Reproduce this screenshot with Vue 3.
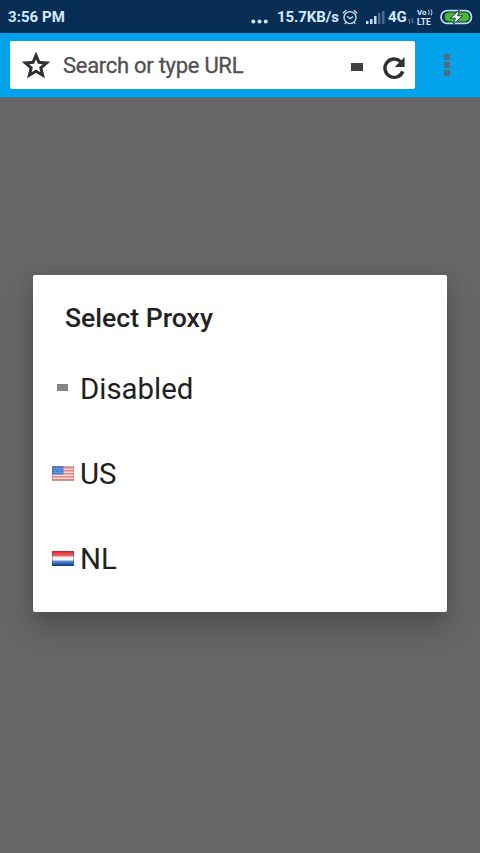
<script setup>
const stripes = [0, 1, 2, 3, 4]
const signal = [
  { x: 0, h: 3, on: true },
  { x: 4, h: 5, on: true },
  { x: 8, h: 8, on: true },
  { x: 12, h: 11, on: false },
  { x: 16, h: 13, on: false }
]
const proxies = [
  { id: 'none', label: 'Disabled' },
  { id: 'us', label: 'US' },
  { id: 'nl', label: 'NL' }
]
</script>

<template>
  <div class="screen">
    <header class="status">
      <span class="time">3:56 PM</span>
      <svg class="dots" width="18" height="5" viewBox="0 0 18 5"><circle cx="2.3" cy="2.5" r="2" /><circle cx="8.5" cy="2.5" r="2" /><circle cx="14.7" cy="2.5" r="2" /></svg>
      <span class="speed">15.7KB/s</span>
      <svg class="alarm" width="16" height="16" viewBox="0 0 16 16">
        <circle cx="8" cy="8.6" r="6" />
        <path d="M.8 4.3 4.2 1.2M15.2 4.3 11.8 1.2M5 7.2 8 9.7l3.2-2.2M4 13.4 2.7 14.8M12 13.4l1.3 1.4" />
      </svg>
      <svg class="signal" width="19" height="13" viewBox="0 0 19 13">
        <rect v-for="b in signal" :key="b.x" :x="b.x" :y="13 - b.h" width="2.5" :height="b.h" :class="{ off: !b.on }" />
      </svg>
      <span class="net">4G</span>
      <svg class="arrows" width="6" height="6" viewBox="0 0 6 6"><path d="M1.5 6V1L0 2.5M4.2 0v5L5.7 3.5" /></svg>
      <span class="volte">
        <span class="vo">Vo<svg width="5" height="7" viewBox="0 0 5 7"><path d="M.5 1Q2 3.5.5 6M3 .5Q5 3.5 3 6.5" /></svg></span>
        <span class="lte">LTE</span>
      </span>
      <svg class="battery" width="33" height="16" viewBox="0 0 33 16">
        <rect class="shell" x="1" y="1.6" width="30.5" height="12.8" rx="6.4" />
        <path class="fill" d="M9.5 3.6H25a4.4 4.4 0 0 1 0 8.8H9.5Q4.6 12.4 4.6 8T9.5 3.6Z" />
        <path class="bolt" d="M19.3 1 10.4 9.2h5l-2 6L22.5 6.8h-4.9Z" />
      </svg>
    </header>

    <div class="toolbar">
      <div class="search">
        <svg class="star" width="28" height="27" viewBox="0 0 28 27"><path d="M14 3.4 16.9 10.3 24.6 10.9 18.8 15.8 20.6 23.2 14 19.3 7.4 23.2 9.2 15.8 3.4 10.9 11.1 10.3Z" /></svg>
        <span class="placeholder">Search or type URL</span>
        <span class="proxy-mark"></span>
        <svg class="reload" width="24" height="24" viewBox="0 0 24 24"><path class="arc" d="M20.8 15.3A9.2 9.2 0 1 1 18.6 5.6" /><path class="head" d="M22.6 1V11H12.8L16.4 7.2 19.2 4.4Z" /></svg>
      </div>
      <div class="menu"><span></span><span></span><span></span></div>
    </div>

    <main class="backdrop">
      <section class="dialog">
        <h1>Select Proxy</h1>
        <ul>
          <li v-for="p in proxies" :key="p.id">
            <span class="icon">
              <span v-if="p.id === 'none'" class="none"></span>
              <svg v-else-if="p.id === 'us'" width="22" height="15" viewBox="0 0 22 15">
                <rect width="22" height="15" fill="#fbe3df" />
                <rect v-for="s in stripes" :key="s" x="0" :y="s * 3 + 1" width="22" height="1.5" fill="#ee7f76" />
                <rect width="11.5" height="8.5" fill="#4a82d6" />
                <path d="M2 2.5H10M3 4.5H10M2 6.5H10" stroke="#8db4ea" stroke-width=".8" stroke-dasharray="1 1.2" />
                <rect x=".5" y=".5" width="21" height="14" fill="none" stroke="#a75c69" stroke-opacity=".4" />
              </svg>
              <svg v-else width="22" height="15" viewBox="0 0 22 15">
                <defs>
                  <linearGradient id="red" x2="0" y2="1"><stop stop-color="#bd2028" /><stop offset=".4" stop-color="#e84046" /><stop offset="1" stop-color="#ee6c6c" /></linearGradient>
                  <linearGradient id="blue" x2="0" y2="1"><stop stop-color="#6999d4" /><stop offset=".65" stop-color="#275bad" /><stop offset="1" stop-color="#122f70" /></linearGradient>
                </defs>
                <rect width="22" height="15" fill="#f5f6f9" />
                <rect width="22" height="5.5" fill="url(#red)" />
                <rect y="9.5" width="22" height="5.5" fill="url(#blue)" />
                <path d="M.5 0V15M21.5 0V15" stroke="#34405f" stroke-opacity=".4" />
              </svg>
            </span>
            <span class="label">{{ p.label }}</span>
          </li>
        </ul>
      </section>
    </main>
  </div>
</template>

<style>
body { margin: 0; background: #666; }
</style>

<style scoped>
.screen { display: flex; flex-direction: column; width: 480px; height: 853px; overflow: hidden; font-family: Roboto, "Liberation Sans", sans-serif; background: #666; }
svg { display: block; flex: none; }
.status { box-sizing: border-box; display: flex; align-items: center; height: 33px; flex: none; padding: 1px 7px 0 8px; background: #092e56; color: #d5e9fa; font-size: 15px; font-weight: 700; white-space: nowrap; }
.time { width: 243px; flex: none; letter-spacing: .05px; }
.dots { fill: #d5e9fa; margin-top: 8px; }
.speed { width: 64px; flex: none; margin-left: 8px; letter-spacing: -.1px; }
.alarm { margin-left: 1px; fill: none; stroke: #c4dbef; stroke-width: 1.4; }
.signal { margin-left: 8px; fill: #c4dbef; }
.signal .off { fill: #48698c; }
.net { width: 20px; flex: none; margin-left: 3px; }
.arrows { margin: 8px 0 0 0; fill: none; stroke: #6384a4; stroke-width: 1; }
.volte { display: flex; flex-direction: column; flex: none; width: 17px; margin-left: 3px; font-size: 8.5px; }
.vo, .lte { display: flex; align-items: center; height: 8px; line-height: 8px; }
.vo { font-size: 8px; padding-bottom: 1px; }
.vo svg { margin-left: 1px; fill: none; stroke: #c4dbef; stroke-width: 1; }
.battery { margin-left: 6px; }
.shell { fill: #092e56; stroke: #c4dcec; stroke-width: 1.7; }
.fill { fill: #49b830; }
.bolt { fill: #fff; stroke: #153f4c; stroke-width: 1; }
.toolbar { box-sizing: border-box; display: flex; align-items: flex-start; height: 65px; flex: none; padding: 8px 0 0 10px; background: #02a3eb; border-bottom: 1px solid #277ca5; }
.search { box-sizing: border-box; display: flex; align-items: center; width: 405px; height: 48px; padding-left: 12px; background: #fff; border-radius: 2px; }
.star { margin-top: 1px; fill: none; stroke: #303030; stroke-width: 3; }
.placeholder { width: 288px; margin: 2px 0 0 13px; color: #505050; font-size: 22px; line-height: 28px; letter-spacing: -.28px; -webkit-text-stroke: .3px #505050; white-space: nowrap; }
.proxy-mark { width: 12px; height: 8px; margin-top: 4px; background: #404040; }
.reload { margin: 5px 0 0 19px; }
.arc { fill: none; stroke: #303030; stroke-width: 3.4; }
.head { fill: #303030; }
.menu { display: flex; flex-direction: column; gap: 2px; margin: 13px 0 0 29px; }
.menu span { width: 6px; height: 6px; background: #536c7d; }
.backdrop { display: flex; flex: 1; align-items: flex-start; padding: 177px 33px 0; background: #666; }
.dialog { box-sizing: border-box; width: 414px; height: 337px; padding-top: 28px; background: #fff; border-radius: 2px; box-shadow: 0 16px 28px rgba(0, 0, 0, .22), 0 0 16px rgba(0, 0, 0, .08); }
h1 { margin: 0 0 0 32px; color: #222; font-size: 26.6px; font-weight: 500; line-height: 30px; }
ul { margin: 13px 0 0; padding: 0; list-style: none; }
li { display: flex; align-items: center; height: 85.4px; padding-left: 18.5px; color: #212121; font-size: 29.4px; }
.icon { display: flex; width: 22px; height: 15px; align-items: center; justify-content: center; margin-top: -2px; }
.none { width: 11px; height: 7px; background: #858585; }
.label { margin-left: 6.5px; line-height: 34px; }
</style>
